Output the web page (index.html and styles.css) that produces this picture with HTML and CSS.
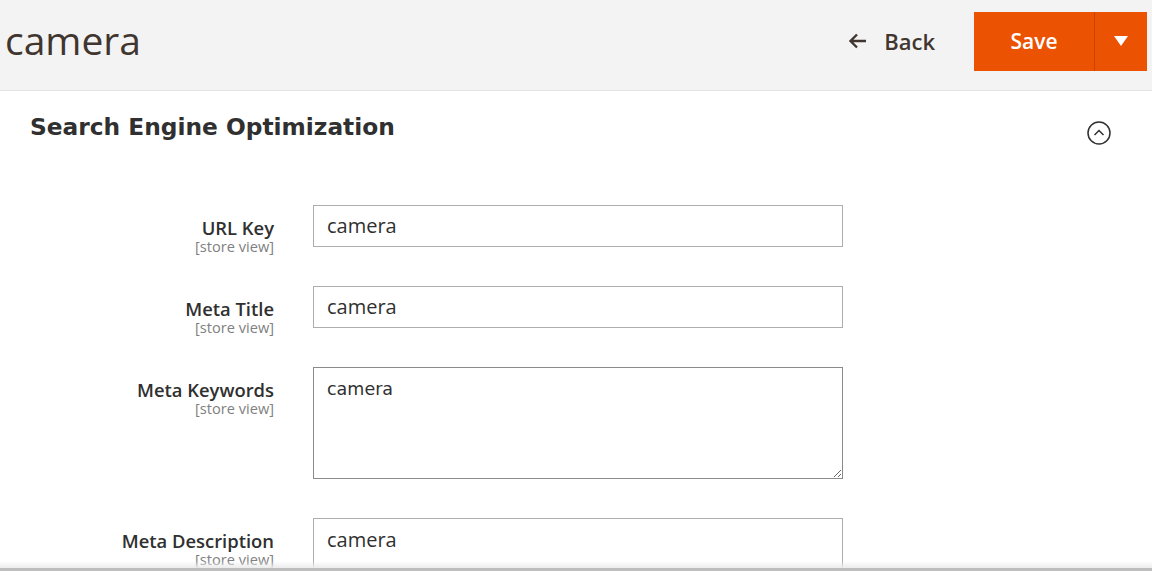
FILE: index.html
```html
<!DOCTYPE html>
<html>
<head>
<meta charset="utf-8">
<link rel="stylesheet" href="styles.css">
</head>
<body>
<header class="page-header">
  <h1 class="page-title">camera</h1>
  <div class="actions">
    <a class="back">
      <svg class="back-icon" width="19" height="16" viewBox="0 0 19 16"><path d="M18 8H2.5M9 1.5L2.5 8 9 14.5" fill="none" stroke="#41362f" stroke-width="2.4"/></svg>
      <span>Back</span>
    </a>
    <div class="split">
      <button class="save">Save</button>
      <button class="toggle"><svg width="14" height="10" viewBox="0 0 14 10"><path d="M0 0h14L7 10z" fill="#fff"/></svg></button>
    </div>
  </div>
</header>
<section class="section">
  <div class="section-head">
    <h2 class="section-title">Search Engine Optimization</h2>
    <svg class="collapse" width="26" height="26" viewBox="0 0 26 26"><circle cx="13" cy="13" r="11" fill="none" stroke="#303030" stroke-width="1.5"/><path d="M8.5 15l4.5-4.5 4.5 4.5" fill="none" stroke="#303030" stroke-width="1.5"/></svg>
  </div>
  <div class="form">
    <div class="label"><span class="name">URL Key</span><span class="scope">[store view]</span></div>
    <input class="input" type="text" value="camera">
    <div class="label"><span class="name">Meta Title</span><span class="scope">[store view]</span></div>
    <input class="input" type="text" value="camera">
    <div class="label"><span class="name">Meta Keywords</span><span class="scope">[store view]</span></div>
    <textarea class="area area-kw">camera</textarea>
    <div class="label"><span class="name">Meta Description</span><span class="scope">[store view]</span></div>
    <textarea class="area area-desc">camera</textarea>
  </div>
</section>
<div class="bottom-bar"></div>
</body>
</html>
```
FILE: styles.css
```css
html, body { margin: 0; padding: 0; background: #fff; overflow: hidden; }
body { font-family: "Open Sans", sans-serif; color: #303030; width: 1152px; height: 571px; }
.page-header {
  height: 90px;
  background: #f3f3f3;
  border-bottom: 1px solid #e3e3e3;
  display: flex;
  justify-content: space-between;
  align-items: flex-start;
}
.page-title {
  margin: 15px 0 0 5px;
  font-weight: 400;
  font-size: 39px;
  line-height: 50px;
  color: #41362f;
}
.actions { display: flex; align-items: flex-start; margin-top: 12px; margin-right: 5px; }
.back { display: flex; align-items: center; height: 58px; color: #41362f; font-size: 22px; font-weight: 600; margin-right: 39px; }
.back-icon { margin-right: 17px; }
.split { display: flex; height: 59px; }
.save {
  width: 120px; border: 0; background: #eb5202; color: #fff;
  font-family: "Open Sans", sans-serif; font-size: 21px; font-weight: 600; padding: 0 0 2px 0;
}
.toggle {
  width: 53px; border: 0; border-left: 1px solid #c44603; background: #eb5202;
  display: flex; align-items: center; justify-content: center; padding: 0 0 1px 0;
}
.section-head { display: flex; justify-content: space-between; padding: 20px 40px 0 30px; height: 114px; box-sizing: border-box; }
.section-title { margin: 0; font-family: "DejaVu Sans", sans-serif; font-weight: 700; font-size: 23.3px; line-height: 32px; color: #303030; }
.collapse { margin-top: 9px; }
.form {
  display: grid;
  grid-template-columns: 274px 530px;
  column-gap: 39px;
  row-gap: 39px;
  align-items: start;
}
.label {
  display: flex; flex-direction: column; align-items: flex-end;
  height: 42px; box-sizing: border-box; padding-top: 13px;
}
.name { font-size: 18.4px; font-weight: 600; line-height: 20px; color: #303030; white-space: nowrap; }
.scope { font-size: 14.6px; line-height: 14px; color: #808080; white-space: nowrap; margin-top: 1px; }
.input, .area {
  box-sizing: border-box; width: 530px; border: 1px solid #adadad; margin: 0;
  font-family: "Open Sans", sans-serif; font-size: 20px; color: #303030; background: #fff; outline: none;
}
.input { height: 42px; padding: 0 13px 2px; }
.area { padding: 9px 13px; resize: vertical; display: block; }
.area-kw { height: 112px; padding-top: 11px; font-family: "DejaVu Sans", sans-serif; font-size: 17.5px; border-color: #8a8a8a; }
.area-desc { height: 112px; padding-top: 7px; }
.bottom-bar {
  position: fixed; left: 0; right: 0; bottom: 0; height: 10px;
  background: linear-gradient(to bottom, rgba(255,255,255,0) 0, #ececec 7px, #bdbdbd 7px, #bdbdbd 10px);
}
```
